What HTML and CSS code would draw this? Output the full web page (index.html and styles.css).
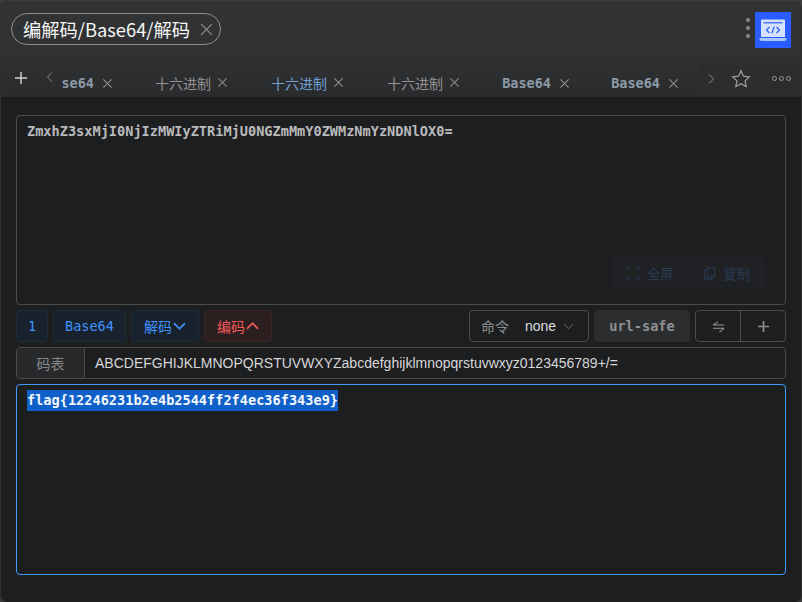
FILE: index.html
```html
<!DOCTYPE html>
<html lang="zh-CN">
<head>
  <meta charset="UTF-8">
  <meta name="viewport" content="width=device-width, initial-scale=1.0">
  <title>编解码/Base64/解码</title>
  <link rel="stylesheet" href="styles.css">
</head>
<body>
  <div class="window">
    <div class="header">
      <div class="title-bar">
        <div class="title-pill">
          <span>编解码/Base64/解码</span>
          <svg class="close-icon big" viewBox="0 0 12 12"><path d="M1 1l10 10M11 1L1 11"/></svg>
        </div>
        <div class="more-dots"><i></i><i></i><i></i></div>
        <div class="app-icon">
          <svg viewBox="0 0 36 36" width="36" height="36">
            <path d="M7 7.500h22a1 1 0 0 1 1 1V25H6V8.500a1 1 0 0 1 1-1z" fill="#d5e2ff"/>
            <path d="M8.500 10h19v1.500h-19z" fill="#2b5cff" opacity="0.8"/>
            <path d="M4.500 26h27v1a2 2 0 0 1-2 2h-23a2 2 0 0 1-2-2z" fill="#a9c3ff"/>
            <path d="M14.500 15l-3 3 3 3M21.500 15l3 3-3 3M19.300 14.500l-2.600 7" fill="none" stroke="#2b5cff" stroke-width="1.200"/>
          </svg>
        </div>
      </div>
      <div class="tab-bar">
        <svg class="tab-add" viewBox="0 0 14 14"><path d="M7 1v12M1 7h12"/></svg>
        <svg class="tab-arrow" viewBox="0 0 8 12"><path d="M6 1.500L1.500 6 6 10.500"/></svg>
        <div class="tabs">
          <div class="tab mono">Base64 <svg class="close-icon" viewBox="0 0 12 12"><path d="M1.500 1.500l9 9M10.500 1.500l-9 9"/></svg></div>
          <div class="tab">十六进制 <svg class="close-icon" viewBox="0 0 12 12"><path d="M1.500 1.500l9 9M10.500 1.500l-9 9"/></svg></div>
          <div class="tab active">十六进制 <svg class="close-icon" viewBox="0 0 12 12"><path d="M1.500 1.500l9 9M10.500 1.500l-9 9"/></svg></div>
          <div class="tab">十六进制 <svg class="close-icon" viewBox="0 0 12 12"><path d="M1.500 1.500l9 9M10.500 1.500l-9 9"/></svg></div>
          <div class="tab mono">Base64 <svg class="close-icon" viewBox="0 0 12 12"><path d="M1.500 1.500l9 9M10.500 1.500l-9 9"/></svg></div>
          <div class="tab mono">Base64 <svg class="close-icon" viewBox="0 0 12 12"><path d="M1.500 1.500l9 9M10.500 1.500l-9 9"/></svg></div>
        </div>
        <div class="tab-tools">
          <svg class="tab-arrow" viewBox="0 0 8 12"><path d="M2 1.500L6.500 6 2 10.500"/></svg>
          <svg class="star" viewBox="0 0 20 20"><path d="M10 1.800l2.500 5.400 5.800.7-4.300 4 1.200 5.800L10 14.800l-5.200 2.900L6 11.900l-4.300-4 5.800-.7z"/></svg>
          <div class="tab-more"><i></i><i></i><i></i></div>
        </div>
      </div>
    </div>

    <div class="content">
      <div class="text-box input-box">
        <span class="mono-text">ZmxhZ3sxMjI0NjIzMWIyZTRiMjU0NGZmMmY0ZWMzNmYzNDNlOX0=</span>
        <div class="box-actions">
          <span class="box-action">
            <svg viewBox="0 0 14 14"><path d="M1 4V1h3M10 1h3v3M13 10v3h-3M4 13H1v-3"/></svg>
            全屏
          </span>
          <span class="box-action">
            <svg viewBox="0 0 14 14"><path d="M4.500 1h8v9.500h-8zM4.500 3.500H1.500V13h8v-2.500"/></svg>
            复制
          </span>
        </div>
      </div>

      <div class="toolbar">
        <button class="btn btn-blue btn-num">1</button>
        <button class="btn btn-blue btn-base">Base64</button>
        <button class="btn btn-blue btn-code">解码<svg viewBox="0 0 14 8"><path d="M1 1l6 6 6-6"/></svg></button>
        <button class="btn btn-red btn-code">编码<svg viewBox="0 0 14 8"><path d="M1 7l6-6 6 6"/></svg></button>
        <div class="select-box">
          <span class="select-label">命令</span>
          <span class="select-value">none</span>
          <svg viewBox="0 0 12 7"><path d="M1 1l5 5 5-5"/></svg>
        </div>
        <button class="btn btn-gray">url-safe</button>
        <div class="btn-group">
          <div class="group-item">
            <svg viewBox="0 0 14 14"><path d="M1 5.500h12M1 5.500L6.500 2M1 9h12M13 9l-5 4"/></svg>
          </div>
          <div class="group-item">
            <svg class="thick" viewBox="0 0 14 14"><path d="M7 1v12M1 7h12"/></svg>
          </div>
        </div>
      </div>

      <div class="table-row">
        <span class="table-label">码表</span>
        <span class="table-value">ABCDEFGHIJKLMNOPQRSTUVWXYZabcdefghijklmnopqrstuvwxyz0123456789+/=</span>
      </div>

      <div class="text-box output-box">
        <span class="mono-text selected">flag{12246231b2e4b2544ff2f4ec36f343e9}</span>
      </div>
    </div>
  </div>
</body>
</html>
```

FILE: styles.css
```css
* {
  box-sizing: border-box;
}

html, body {
  height: 100%;
}

body {
  margin: 0;
  background-color: #3b3c3e;
  font-family: "Noto Sans CJK SC", "Noto Sans", sans-serif;
  overflow: hidden;
}

svg {
  display: block;
}

.window {
  height: 602px;
  margin-top: 1px;
  display: flex;
  flex-direction: column;
  background-color: #1d1e20;
  border: 1px solid #2e2f31;
  border-top: none;
  border-radius: 8px;
  overflow: hidden;
}

/* Title and tabs */
.header {
  height: 96px;
  flex-shrink: 0;
  background: linear-gradient(180deg, #323335 0%, #303133 55%, #2a2b2d 100%);
}

.title-bar {
  height: 59px;
  padding: 10px 10px 0 10px;
  display: flex;
  align-items: flex-start;
}

.title-pill {
  width: 210px;
  height: 32px;
  margin-top: 2px;
  padding: 0 7px 0 11px;
  display: flex;
  align-items: center;
  justify-content: space-between;
  border: 1px solid #8c8d8f;
  border-radius: 16px;
  color: #f7f7f7;
  font-size: 18.300px;
  white-space: nowrap;
}

.close-icon {
  width: 11px;
  height: 11px;
  flex-shrink: 0;
  fill: none;
  stroke: #8f9092;
  stroke-width: 1.100;
}

.close-icon.big {
  width: 13px;
  height: 13px;
}

.more-dots {
  margin-left: auto;
  margin-top: 7px;
  margin-right: 5px;
  display: flex;
  flex-direction: column;
  gap: 4px;
}

.more-dots i {
  width: 4px;
  height: 4px;
  border-radius: 50%;
  background: #8a8b8d;
}

.app-icon {
  width: 36px;
  height: 36px;
  margin-top: 1px;
  background: #2b5cff;
}

.tab-bar {
  height: 37px;
  display: flex;
  align-items: center;
}

.tab-add {
  width: 14px;
  height: 14px;
  margin-left: 13px;
  margin-top: -2px;
  flex-shrink: 0;
  fill: none;
  stroke: #d4d4d4;
  stroke-width: 1.400;
}

.tab-arrow {
  width: 8px;
  height: 12px;
  margin-left: 18px;
  margin-top: -3px;
  flex-shrink: 0;
  fill: none;
  stroke: #8a8b8d;
  stroke-width: 1;
}

.tabs {
  width: 637px;
  margin-left: 8px;
  height: 37px;
  display: flex;
  justify-content: flex-end;
  overflow: hidden;
  flex-shrink: 0;
}

.tab {
  flex-shrink: 0;
  width: 116px;
  padding: 8px 21px 0 0;
  display: flex;
  align-items: center;
  justify-content: flex-end;
  gap: 6px;
  color: #909193;
  font-size: 14px;
  white-space: nowrap;
}

.tab.mono {
  width: 109px;
  padding: 9px 20px 0 0;
  gap: 8px;
  font-family: "DejaVu Sans Mono", monospace;
  font-weight: bold;
  font-size: 13.500px;
  color: #8d9aa8;
}

.tab.active {
  color: #6f9fd6;
}

.tab-tools {
  flex: 1;
  height: 34px;
  padding-bottom: 3px;
  align-self: flex-end;
  display: flex;
  align-items: center;
  background: #2c2d2f;
}

.tab-tools .tab-arrow {
  margin-left: 8px;
  margin-top: 0;
}

.star {
  width: 20px;
  height: 20px;
  margin-left: 16px;
  flex-shrink: 0;
  fill: none;
  stroke: #a0a1a3;
  stroke-width: 1.200;
}

.tab-more {
  margin-left: 21px;
  display: flex;
  gap: 2px;
}

.tab-more i {
  width: 5px;
  height: 5px;
  border: 1px solid #99999b;
  border-radius: 50%;
}

/* Main panel */
.content {
  flex: 1;
  padding: 18px 15px 0 15px;
  display: flex;
  flex-direction: column;
  gap: 5px;
}

.text-box {
  position: relative;
  width: 770px;
  padding: 3px 10px;
  border-radius: 4px;
  line-height: 21px;
}

.input-box {
  height: 190px;
  border: 1px solid #4a4b4d;
}

.output-box {
  height: 191px;
  border: 1px solid #3f9bff;
}

.mono-text {
  font-family: "DejaVu Sans Mono", monospace;
  font-size: 13.600px;
  font-weight: bold;
  color: #b9babc;
}

.mono-text.selected {
  display: inline-block;
  height: 21px;
  background: #0f60c8;
  color: #f4f7fc;
}

.box-actions {
  position: absolute;
  right: 19px;
  bottom: 15px;
  width: 155px;
  height: 32px;
  display: flex;
  align-items: center;
  justify-content: center;
  gap: 29px;
  background: #1f2124;
  border-radius: 3px;
}

.box-action {
  display: flex;
  align-items: center;
  gap: 7px;
  font-size: 13.500px;
  color: #263a52;
}

.box-action svg {
  width: 13px;
  height: 13px;
  fill: none;
  stroke: #263a52;
  stroke-width: 1.200;
}

/* Toolbar */
.toolbar {
  height: 32px;
  display: flex;
  width: 770px;
  gap: 5px;
}

.btn {
  height: 32px;
  padding: 0;
  display: flex;
  align-items: center;
  justify-content: center;
  border-radius: 4px;
  font-family: "DejaVu Sans Mono", monospace;
  font-size: 13.500px;
  cursor: pointer;
}

.btn-blue {
  background: #18222d;
  border: 1px solid #1c2c3e;
  color: #3f93ff;
}

.btn-red {
  background: #2b1f20;
  border: 1px solid #3c2526;
  color: #f25a59;
}

.btn-num {
  width: 32px;
}

.btn-base {
  width: 73px;
}

.btn-code {
  width: 68px;
  font-family: "Noto Sans CJK SC", sans-serif;
  font-size: 14px;
  gap: 1px;
}

.btn-code svg {
  width: 13px;
  height: 8px;
  fill: none;
  stroke: currentColor;
  stroke-width: 1.800;
}

.select-box {
  width: 120px;
  height: 32px;
  margin-left: auto;
  padding: 0 14px 0 11px;
  display: flex;
  align-items: center;
  border: 1px solid #4a4b4d;
  border-radius: 4px;
  font-size: 14px;
}

.select-label {
  color: #8b8c8e;
}

.select-value {
  margin-left: 16px;
  color: #dcdcdc;
  font-family: "Liberation Sans", sans-serif;
}

.select-box svg {
  width: 11px;
  height: 7px;
  margin-left: auto;
  fill: none;
  stroke: #77787a;
  stroke-width: 1;
}

.btn-gray {
  width: 96px;
  background: #2c2d2f;
  border: none;
  color: #8f9092;
  font-weight: bold;
  font-size: 13.600px;
}

.btn-group {
  width: 91px;
  height: 32px;
  display: flex;
  border: 1px solid #4a4b4d;
  border-radius: 4px;
}

.group-item {
  flex: 1;
  display: flex;
  align-items: center;
  justify-content: center;
}

.group-item + .group-item {
  border-left: 1px solid #4a4b4d;
}

.group-item svg {
  width: 13px;
  height: 13px;
  fill: none;
  stroke: #98999b;
  stroke-width: 1.100;
}

.group-item svg.thick {
  stroke: #8e8f91;
  stroke-width: 1.800;
}

/* Code table row */
.table-row {
  width: 770px;
  height: 32px;
  display: flex;
  border: 1px solid #4a4b4d;
  border-radius: 4px;
  overflow: hidden;
}

.table-label {
  width: 68px;
  display: flex;
  align-items: center;
  justify-content: center;
  flex-shrink: 0;
  background: #28292b;
  border-right: 1px solid #4a4b4d;
  color: #87888a;
  font-size: 14px;
}

.table-value {
  padding-left: 10px;
  display: flex;
  align-items: center;
  color: #d6d6d6;
  font-family: "Liberation Sans", sans-serif;
  font-size: 14px;
}
```
